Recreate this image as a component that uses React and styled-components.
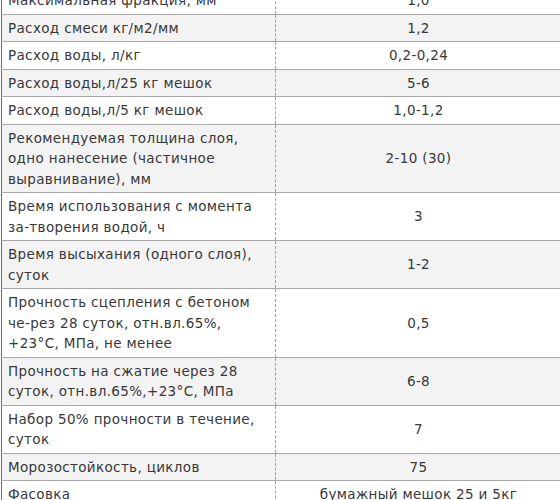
import React from 'react'
import styled, { createGlobalStyle } from 'styled-components'

const GlobalStyle = createGlobalStyle`
    html, body {
        margin: 0;
        padding: 0;
        background: #fff;
        overflow: hidden;
    }
`

const Page = styled.div`
    width: 560px;
    height: 500px;
    overflow: hidden;
    padding-left: 1px;
    box-sizing: border-box;
`

const Table = styled.table`
    margin-top: -13px;
    width: 580px;
    border-collapse: collapse;
    border-left: 1px solid #6f6f6f;
    font-family: "DejaVu Sans", Verdana, sans-serif;
    font-size: 13.5px;
    letter-spacing: 0.35px;
    line-height: 20.5px;
    color: #383838;
`

const Row = styled.tr`
    background: ${props => props.$shade ? '#f3f3f3' : '#fff'};
    border-bottom: 1px solid #a8a8a8;
`

const Name = styled.td`
    width: 261px;
    padding: 3px 6px 3px 6px;
    vertical-align: middle;
    white-space: nowrap;
    border-right: 1px dashed #a0a0a0;
`

const Line = styled.div`
    display: block;
`

const Value = styled.td`
    padding: 3px 26px 3px 6px;
    text-align: center;
    vertical-align: middle;
    white-space: nowrap;
`

const rows = [
    [['Максимальная фракция, мм'], '1,0'],
    [['Расход смеси кг/м2/мм'], '1,2'],
    [['Расход воды, л/кг'], '0,2-0,24'],
    [['Расход воды,л/25 кг мешок'], '5-6'],
    [['Расход воды,л/5 кг мешок'], '1,0-1,2'],
    [['Рекомендуемая толщина слоя,', 'одно нанесение (частичное', 'выравнивание), мм'], '2-10 (30)'],
    [['Время использования с момента', 'за-творения водой, ч'], '3'],
    [['Время высыхания (одного слоя),', 'суток'], '1-2'],
    [['Прочность сцепления с бетоном', 'че-рез 28 суток, отн.вл.65%,', '+23°С, МПа, не менее'], '0,5'],
    [['Прочность на сжатие через 28', 'суток, отн.вл.65%,+23°С, МПа'], '6-8'],
    [['Набор 50% прочности в течение,', 'суток'], '7'],
    [['Морозостойкость, циклов'], '75'],
    [['Фасовка'], 'бумажный мешок 25 и 5кг'],
]

const App = () => {
    return (
        <>
            <GlobalStyle />
            <Page>
                <Table>
                    <tbody>
                        {rows.map(([lines, value], i) => (
                            <Row key={i} $shade={i % 2 === 1}>
                                <Name>
                                    {lines.map((l, j) => <Line key={j}>{l}</Line>)}
                                </Name>
                                <Value>{value}</Value>
                            </Row>
                        ))}
                    </tbody>
                </Table>
            </Page>
        </>
    )
}

export default App
